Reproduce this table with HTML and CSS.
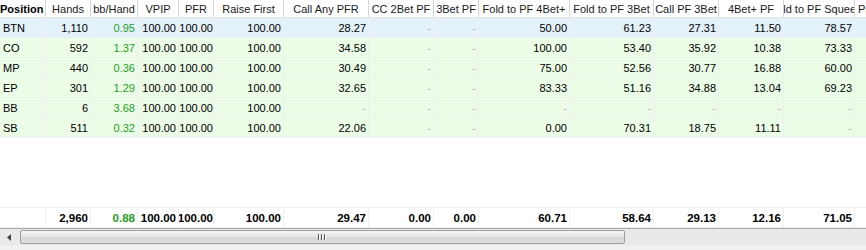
FILE: index.html
```html
<!DOCTYPE html>
<html>
<head>
<meta charset="utf-8">
<link rel="stylesheet" href="styles.css">
</head>
<body>
<div class="grid">
  <div class="row head">
    <div class="c c1 hl"><span>Position</span></div>
    <div class="c c2"><span>Hands</span></div>
    <div class="c c3"><span>bb/Hand</span></div>
    <div class="c c4"><span>VPIP</span></div>
    <div class="c c5"><span>PFR</span></div>
    <div class="c c6"><span>Raise First</span></div>
    <div class="c c7"><span>Call Any PFR</span></div>
    <div class="c c8"><span>CC 2Bet PF</span></div>
    <div class="c c9"><span>3Bet PF</span></div>
    <div class="c c10"><span>Fold to PF 4Bet+</span></div>
    <div class="c c11"><span>Fold to PF 3Bet</span></div>
    <div class="c c12"><span>Call PF 3Bet</span></div>
    <div class="c c13"><span>4Bet+ PF</span></div>
    <div class="c c14"><span>Fold to PF Squeeze</span></div>
    <div class="c c15 hl"><span>PF Squeeze</span></div>
  </div>

  <div class="row data sel">
    <div class="c c1 l">BTN</div><div class="c c2"><span>1,110</span></div><div class="c c3 g"><span>0.95</span></div><div class="c c4"><span>100.00</span></div><div class="c c5"><span>100.00</span></div><div class="c c6"><span>100.00</span></div><div class="c c7"><span>28.27</span></div><div class="c c8 d"><span>-</span></div><div class="c c9 d"><span>-</span></div><div class="c c10"><span>50.00</span></div><div class="c c11"><span>61.23</span></div><div class="c c12"><span>27.31</span></div><div class="c c13"><span>11.50</span></div><div class="c c14"><span>78.57</span></div><div class="c c15"></div>
  </div>
  <div class="row data">
    <div class="c c1 l">CO</div><div class="c c2"><span>592</span></div><div class="c c3 g"><span>1.37</span></div><div class="c c4"><span>100.00</span></div><div class="c c5"><span>100.00</span></div><div class="c c6"><span>100.00</span></div><div class="c c7"><span>34.58</span></div><div class="c c8 d"><span>-</span></div><div class="c c9 d"><span>-</span></div><div class="c c10"><span>100.00</span></div><div class="c c11"><span>53.40</span></div><div class="c c12"><span>35.92</span></div><div class="c c13"><span>10.38</span></div><div class="c c14"><span>73.33</span></div><div class="c c15"></div>
  </div>
  <div class="row data">
    <div class="c c1 l">MP</div><div class="c c2"><span>440</span></div><div class="c c3 g"><span>0.36</span></div><div class="c c4"><span>100.00</span></div><div class="c c5"><span>100.00</span></div><div class="c c6"><span>100.00</span></div><div class="c c7"><span>30.49</span></div><div class="c c8 d"><span>-</span></div><div class="c c9 d"><span>-</span></div><div class="c c10"><span>75.00</span></div><div class="c c11"><span>52.56</span></div><div class="c c12"><span>30.77</span></div><div class="c c13"><span>16.88</span></div><div class="c c14"><span>60.00</span></div><div class="c c15"></div>
  </div>
  <div class="row data">
    <div class="c c1 l">EP</div><div class="c c2"><span>301</span></div><div class="c c3 g"><span>1.29</span></div><div class="c c4"><span>100.00</span></div><div class="c c5"><span>100.00</span></div><div class="c c6"><span>100.00</span></div><div class="c c7"><span>32.65</span></div><div class="c c8 d"><span>-</span></div><div class="c c9 d"><span>-</span></div><div class="c c10"><span>83.33</span></div><div class="c c11"><span>51.16</span></div><div class="c c12"><span>34.88</span></div><div class="c c13"><span>13.04</span></div><div class="c c14"><span>69.23</span></div><div class="c c15"></div>
  </div>
  <div class="row data">
    <div class="c c1 l">BB</div><div class="c c2"><span>6</span></div><div class="c c3 g"><span>3.68</span></div><div class="c c4"><span>100.00</span></div><div class="c c5"><span>100.00</span></div><div class="c c6"><span>100.00</span></div><div class="c c7 d"><span>-</span></div><div class="c c8 d"><span>-</span></div><div class="c c9 d"><span>-</span></div><div class="c c10 d"><span>-</span></div><div class="c c11 d"><span>-</span></div><div class="c c12 d"><span>-</span></div><div class="c c13 d"><span>-</span></div><div class="c c14 d"><span>-</span></div><div class="c c15"></div>
  </div>
  <div class="row data">
    <div class="c c1 l">SB</div><div class="c c2"><span>511</span></div><div class="c c3 g"><span>0.32</span></div><div class="c c4"><span>100.00</span></div><div class="c c5"><span>100.00</span></div><div class="c c6"><span>100.00</span></div><div class="c c7"><span>22.06</span></div><div class="c c8 d"><span>-</span></div><div class="c c9 d"><span>-</span></div><div class="c c10"><span>0.00</span></div><div class="c c11"><span>70.31</span></div><div class="c c12"><span>18.75</span></div><div class="c c13"><span>11.11</span></div><div class="c c14 d"><span>-</span></div><div class="c c15"></div>
  </div>

  <div class="spacer"></div>

  <div class="row total">
    <div class="c c1"></div><div class="c c2"><span>2,960</span></div><div class="c c3 g"><span>0.88</span></div><div class="c c4"><span>100.00</span></div><div class="c c5"><span>100.00</span></div><div class="c c6"><span>100.00</span></div><div class="c c7"><span>29.47</span></div><div class="c c8"><span>0.00</span></div><div class="c c9"><span>0.00</span></div><div class="c c10"><span>60.71</span></div><div class="c c11"><span>58.64</span></div><div class="c c12"><span>29.13</span></div><div class="c c13"><span>12.16</span></div><div class="c c14"><span>71.05</span></div><div class="c c15"></div>
  </div>

  <div class="hscroll">
    <div class="arrow"><svg width="5" height="7" viewBox="0 0 5 7"><path d="M4 0 L0 3.5 L4 7 Z" fill="#404040"/></svg></div>
    <div class="track">
      <div class="thumb"><span class="grip"><i></i><i></i><i></i></span></div>
    </div>
  </div>
  <div class="foot"></div>
</div>
</body>
</html>
```

FILE: styles.css
```css
html, body {
  margin: 0;
  padding: 0;
  background: #ffffff;
}
.grid {
  width: 866px;
  height: 250px;
  overflow: hidden;
  font-family: "Liberation Sans", Arial, sans-serif;
  font-size: 11px;
  color: #000;
  display: flex;
  flex-direction: column;
}
.row {
  display: flex;
  flex: none;
  width: 1000px;
}
.c {
  box-sizing: border-box;
  flex: none;
  overflow: hidden;
  white-space: nowrap;
  display: flex;
  align-items: center;
  justify-content: flex-end;
  padding: 0 2px 0 0;
}
.c1 { width: 46px; }
.c2 { width: 45px; }
.c3 { width: 47px; }
.c4 { width: 41px; }
.c5 { width: 35px; padding-right: 0; }
.c6 { width: 70px; }
.c7 { width: 85px; }
.c8 { width: 65px; }
.c9 { width: 45px; }
.c10 { width: 91px; }
.c11 { width: 84px; }
.c12 { width: 65px; }
.c13 { width: 65px; }
.c14 { width: 71px; }
.c15 { width: 130px; }

.head {
  height: 18px;
  border-bottom: 1px solid #e3e3e3;
  box-sizing: border-box;
  background: #ffffff;
  color: #1a1a1a;
  font-size: 11px;
}
.head .c {
  justify-content: center;
  padding: 0;
  height: 17px;
  border-right: 1px solid #d6d6d6;
}
.head .c1 {
  justify-content: flex-start;
  font-weight: bold;
  color: #000;
}
.head .c15 {
  justify-content: flex-start;
  padding-left: 3px;
}

.data {
  height: 20px;
  box-sizing: border-box;
  border-bottom: 1px solid #efefef;
  background: #ebfce7;
}
.data.sel {
  background: #e3f1fb;
}
.data .c, .total .c {
  border-right: 1px solid #efefef;
  height: 19px;
}
.data .l {
  justify-content: flex-start;
  padding-left: 3px;
}
.g { color: #25a025; }
.d { color: #b8b8b8; }

.spacer {
  flex: none;
  height: 69px;
}
.total {
  height: 21px;
  box-sizing: border-box;
  border-top: 1px solid #efefef;
  border-bottom: 1px solid #efefef;
  font-weight: bold;
  font-size: 11.5px;
  background: #fff;
}

.hscroll {
  flex: none;
  height: 16px;
  width: 866px;
  display: flex;
  border-top: 1px solid #a8a8a8;
  background: #e9e9e9;
}
.arrow {
  width: 18px;
  flex: none;
  display: flex;
  align-items: center;
  justify-content: center;
}
.track {
  flex: 1;
  padding: 1px 0 1px 2px;
  display: flex;
}
.thumb {
  box-sizing: border-box;
  width: 605px;
  height: 14px;
  border: 1px solid #9e9e9e;
  border-radius: 2px;
  background: linear-gradient(#f4f4f4, #e4e4e4 50%, #d6d6d6 51%, #dcdcdc);
  display: flex;
  align-items: center;
  justify-content: center;
}
.grip {
  display: flex;
  gap: 1px;
  margin-left: -1px;
}
.grip i {
  display: block;
  width: 1px;
  height: 6px;
  background: #5a5a5a;
  border-right: 1px solid #fafafa;
}
.foot {
  flex: none;
  height: 10px;
  width: 866px;
  background: #f0f0f0;
}
```
